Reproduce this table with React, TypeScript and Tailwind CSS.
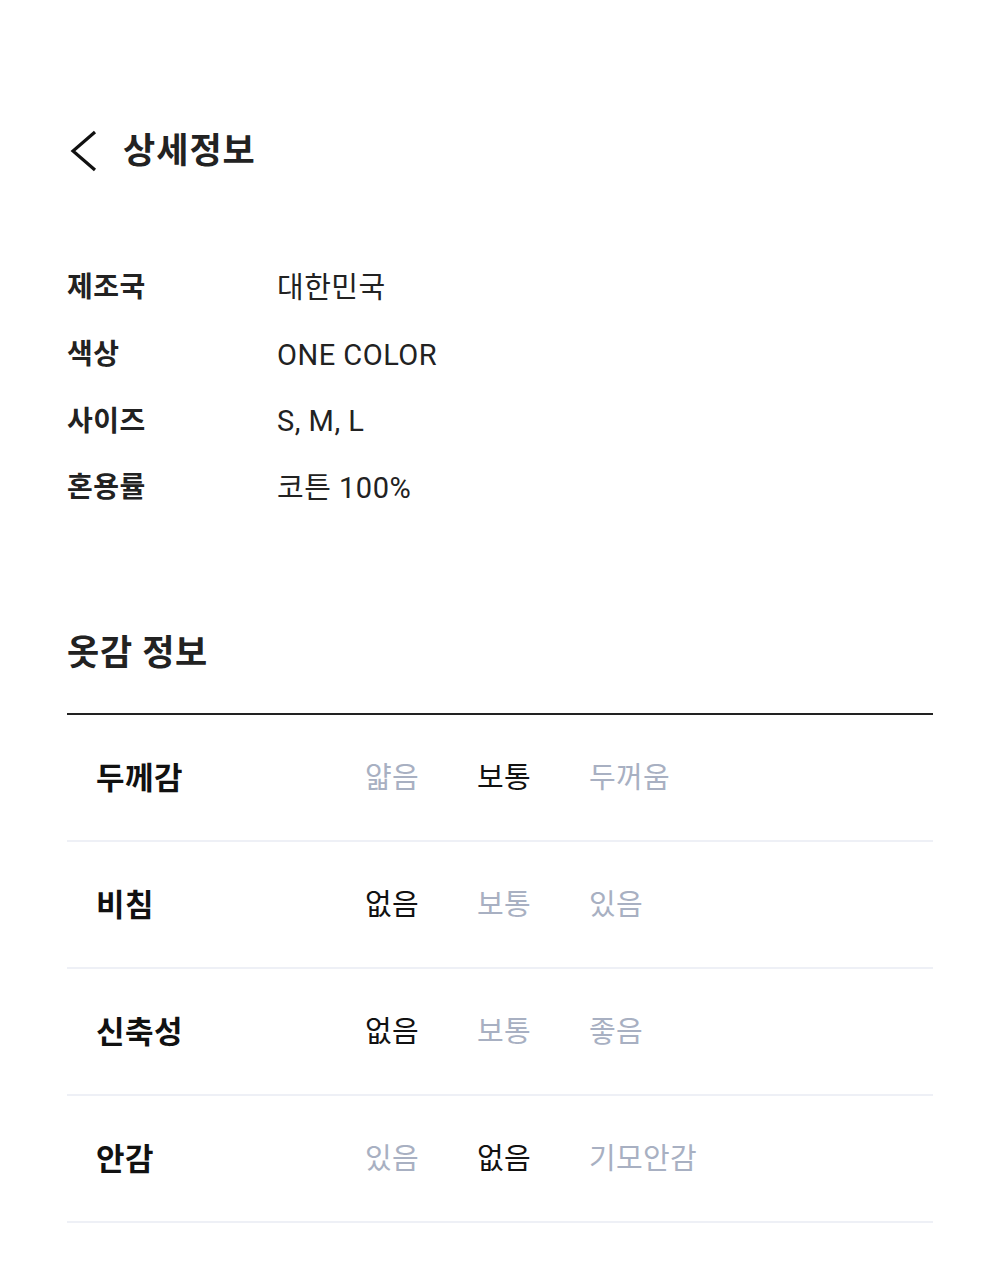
const INFO = [
  { label: '제조국', value: '대한민국' },
  { label: '색상', value: 'ONE COLOR' },
  { label: '사이즈', value: 'S, M, L' },
  { label: '혼용률', value: '코튼 100%' },
]

const FABRIC = [
  { label: '두께감', options: ['얇음', '보통', '두꺼움'], selected: 1 },
  { label: '비침', options: ['없음', '보통', '있음'], selected: 0 },
  { label: '신축성', options: ['없음', '보통', '좋음'], selected: 0 },
  { label: '안감', options: ['있음', '없음', '기모안감'], selected: 1 },
]

export default function App() {
  return (
    <div
      className="h-[1280px] w-[1000px] overflow-hidden bg-white px-[67px] pt-[128px]"
      style={{ fontFamily: 'Roboto, "Noto Sans CJK KR", sans-serif' }}
    >
      <header className="flex h-[46px] items-center gap-[24px]">
        <svg width="32" height="44" viewBox="0 0 32 44" className="shrink-0">
          <path d="M28 3 L6 22 L28 41" fill="none" stroke="#111" strokeWidth="3.2" />
        </svg>
        <h1 className="text-[35px] font-bold leading-none tracking-[1px] text-[#222]">상세정보</h1>
      </header>

      <dl className="mt-[81px]">
        {INFO.map(r => (
          <div key={r.label} className="flex h-[66.7px] items-center">
            <dt className="w-[210px] text-[28px] font-bold leading-none tracking-[0.5px] text-[#222]">{r.label}</dt>
            <dd className="text-[29px] leading-none tracking-[0.5px] text-[#222]">{r.value}</dd>
          </div>
        ))}
      </dl>

      <h2 className="mt-[114px] text-[35px] font-bold leading-none tracking-[0.7px] text-[#222]">옷감 정보</h2>

      <div className="mt-[42px] border-t-2 border-[#222]">
        {FABRIC.map(f => (
          <div key={f.label} className="flex h-[127px] items-center border-b-2 border-[#eef0f6] pl-[29px] pt-[3px]">
            <span className="w-[269px] text-[31px] font-bold leading-none tracking-[0.5px] text-[#111]">{f.label}</span>
            <div className="flex">
              {f.options.map((o, i) => (
                <span
                  key={o}
                  className={
                    i === f.selected
                      ? 'w-[112px] text-[29px] leading-none tracking-[0.3px] text-[#111]'
                      : 'w-[112px] text-[29px] leading-none tracking-[0.3px] text-[#a8b0c2]'
                  }
                >
                  {o}
                </span>
              ))}
            </div>
          </div>
        ))}
      </div>
    </div>
  )
}
